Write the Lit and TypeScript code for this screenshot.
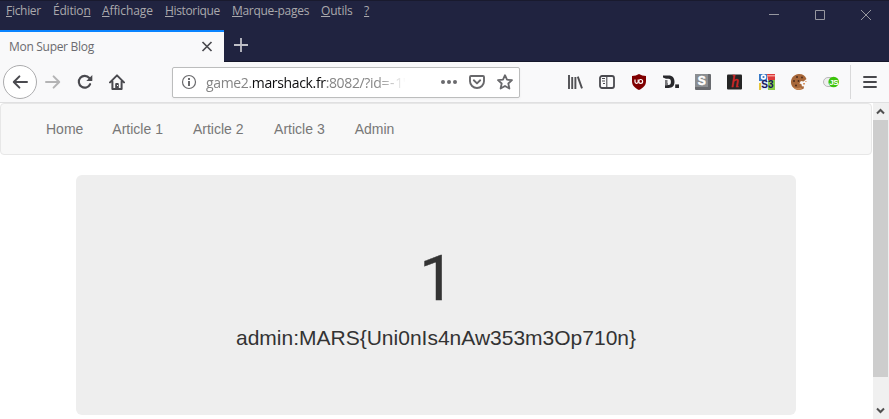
import { LitElement, html, css, svg } from "lit";
import { customElement } from "lit/decorators.js";

const menus: [string, string, string, string][] = [
  ["", "F", "ichier", "m0"],
  ["Éditio", "n", "", "m1"],
  ["", "A", "ffichage", "m2"],
  ["", "H", "istorique", "m3"],
  ["", "M", "arque-pages", "m4"],
  ["", "O", "utils", "m5"],
  ["", "?", "", "m6"],
];

const icon = (body: unknown, cls = "") =>
  html`<svg class="icon ${cls}" width="16" height="16" viewBox="0 0 16 16">${body}</svg>`;

const back = svg`<path d="M15 8H2M7.4 2.4L1.8 8l5.6 5.6" fill="none" stroke="#4a4a4f" stroke-width="2" stroke-linecap="round" stroke-linejoin="round"/>`;
const forward = svg`<path d="M1 8h13M8.6 2.4L14.2 8l-5.6 5.6" fill="none" stroke="#b4b4b5" stroke-width="2" stroke-linecap="round" stroke-linejoin="round"/>`;
const reload = svg`<path d="M13.1 10.2A5.9 5.9 0 1 1 12.3 4" fill="none" stroke="#4a4a4f" stroke-width="2.1" stroke-linecap="round"/><path d="M15.3 1v5.4q0 .6-.6.6H9.3z" fill="#4a4a4f"/>`;
const home = svg`<path d="M1 8.4L8 1.4l7 7M3.4 7.5V15h9.2V7.5" fill="none" stroke="#4a4a4f" stroke-width="2" stroke-linecap="round" stroke-linejoin="round"/><path d="M6.2 15v-5q0-1 1-1h1.6q1 0 1 1v5z" fill="#4a4a4f"/><path d="M8 11h1v1H8z" fill="#fff"/>`;
const info = svg`<circle cx="8" cy="8" r="6.5" fill="none" stroke="#6a6a6d" stroke-width="1.2"/><path d="M7 4h2v2H7zM7 7h2v5H7z" fill="#6a6a6d"/>`;
const dots = svg`<g fill="#6a6a6d"><circle cx="2" cy="8" r="2"/><circle cx="8" cy="8" r="2"/><circle cx="14" cy="8" r="2"/></g>`;
const pocket = svg`<path d="M2 2h12q1 0 1 1v4.2a7 6.8 0 0 1-14 0V3q0-1 1-1z" fill="none" stroke="#68686b" stroke-width="1.9"/><path d="M4.8 6.3L8 9.4l3.2-3.1" fill="none" stroke="#68686b" stroke-width="1.9" stroke-linecap="round" stroke-linejoin="round"/>`;
const star = svg`<path d="M8 1.2l2 4.5 5 .5-3.7 3.3 1.1 5L8 11.9l-4.4 2.6 1.1-5L1 6.2l5-.5z" fill="none" stroke="#68686b" stroke-width="1.8" stroke-linejoin="round"/>`;
const library = svg`<path d="M2 1v14M5.2 3v12M8.400 3v12M10.800 2.600L15 14.400" fill="none" stroke="#505053" stroke-width="1.900"/>`;
const sidebar = svg`<rect x="1" y="2" width="14" height="12" rx="2" fill="none" stroke="#4a4a4f" stroke-width="1.8"/><path d="M7.8 2.5v11M3 4.5h3M3 7h3M4 9.5h2" stroke="#4a4a4f" stroke-width="1.1"/>`;
const shield = svg`<path d="M8 0Q11 1.8 15 2v5c0 4.500-2.500 6.800-7 9-4.500-2.200-7-4.500-7-9V2Q5 1.800 8 0z" fill="#800000"/><path d="M4 5.600v2.200q0 1.500 1.500 1.500h.2q1.500 0 1.500-1.500V5.600" fill="none" stroke="#fff" stroke-width="1.200"/><circle cx="9.700" cy="7.400" r="1.900" fill="none" stroke="#fff" stroke-width="1.200"/>`;
const dashlane = svg`<path d="M0 1.500h5.500C9.800 1.500 11.500 4 11.500 7.800S9.800 14 5.500 14H2V9h2.500v2h1c1.700 0 2.400-1 2.400-3.200S7.200 4.700 5.500 4.700H3L0 3.500z" fill="#29292c"/><path d="M2 6h2.500v5.500H2z" fill="#77777a"/><path d="M12.200 10.400H16V14h-3.800z" fill="#29292c"/>`;
const stylish = svg`<rect width="16" height="16" rx="1" fill="#696b6f"/><path d="M0 0h13v13H0z" fill="#8b8e91"/><text x="6.700" y="11" text-anchor="middle" class="glyph-s">S</text>`;
const hack = svg`<rect y="0.500" width="15" height="15" rx="1" fill="#252525"/><text x="8" y="13" text-anchor="middle" class="glyph-h">h</text>`;
const search3 = svg`<rect x=".5" y=".5" width="15" height="15" fill="#e9f2fb"/><path d="M0 0h8v7H0z" fill="#3779c6"/><path d="M8 0h8v6H9z" fill="#dc3b3b"/><path d="M8 1h8v1.500H8z" fill="#f69a94"/><path d="M0 9h2v7H0z" fill="#e7c73a"/><path d="M9 6h7v10H9z" fill="#8cca49"/><circle cx="4.500" cy="3" r="2.700" fill="#fff"/><circle cx="4.500" cy="3" r="1.100" fill="#3779c6"/><path d="M2 7.500h7V15H2z" fill="#dceaf7"/><text x="2.300" y="14" class="glyph-s3">S3</text>`;
const cookie = svg`<path d="M8 0a8 8 0 1 0 5 14.200l-.5-2.200-1.500.5-.6-2.500-2-.5 1.500-2.500 2.600.5L15.500 5A8 8 0 0 0 8 0z" fill="#a8683a"/><path d="M2 13.200A8 8 0 0 0 11 15l-1-1.500Q6 14.500 2 13.200z" fill="#c98a57"/><g fill="#4e2b1b"><circle cx="6" cy="3" r="1"/><circle cx="11" cy="3.500" r=".9"/><circle cx="3" cy="7" r="1"/><circle cx="7.500" cy="7" r=".9"/><circle cx="5" cy="11.500" r="1"/></g><path d="M12 9h2v1.500h-2zM14.300 7h1.200v1h-1.200z" fill="#d99667"/>`;
const toggle = svg`<rect x=".5" y="3.500" width="14" height="9" rx="4.500" fill="#eee" stroke="#b9b9b9"/><circle cx="10.700" cy="8" r="5.300" fill="#3cc40a"/><text x="10.700" y="11" text-anchor="middle" class="glyph-js">JS</text>`;
const burger = svg`<path d="M2 3h12M2 8h12M2 13h12" stroke="#48484c" stroke-width="1.900" stroke-linecap="round"/>`;

@customElement("app-root")
export class AppRoot extends LitElement {
  static styles = css`
    :host { display: flex; flex-direction: column; width: 889px; height: 419px; overflow: hidden; background: #fff; }
    * { box-sizing: border-box; }
    svg { display: block; flex: none; }
    .title { height: 30px; display: flex; justify-content: space-between; background: #202340; border-top: 1px solid #191a2e; }
    .menus { display: flex; gap: 12px; padding-left: 6px; font: 12px/19px "Open Sans", "Noto Sans", sans-serif; color: #aaa9ad; }
    .menu { white-space: nowrap; height: 19px; }
    .menu u { text-underline-offset: 1px; text-decoration-thickness: 1px; }
    .m0 { width: 35px; letter-spacing: -0.3px; }
    .m1 { width: 37px; letter-spacing: -0.2px; }
    .m2 { width: 51px; letter-spacing: -0.1px; }
    .m3 { width: 55px; letter-spacing: -0.35px; }
    .m4 { width: 77px; letter-spacing: -0.3px; }
    .m5 { width: 31px; letter-spacing: -0.2px; }
    .m6 { width: 6px; }
    .controls { display: flex; padding: 8px 17px 0 0; gap: 34px; }
    .tabs { height: 32px; display: flex; background: #202340; border-bottom: 1px solid #15172b; }
    .tab { width: 224px; height: 32px; display: flex; align-items: center; justify-content: space-between; padding: 0 11px 0 9px; background: #f9f9fa; border-top: 2px solid #0a84ff; }
    .label { font: 12px/18px "Open Sans", "Noto Sans", sans-serif; letter-spacing: -0.3px; color: #6b6b6f; }
    .plus { margin: 7px 0 0 9px; }
    .toolbar { height: 41px; display: flex; align-items: center; background: #f9f9fa; border-bottom: 1px solid #e0e0e1; padding-left: 3px; }
    .ring { width: 34px; height: 34px; border: 1px solid #acacae; border-radius: 50%; background: #fff; display: grid; place-items: center; flex: none; }
    .nav { display: flex; gap: 16px; padding-left: 8px; }
    .url { width: 348px; height: 31px; margin-left: 47px; display: flex; align-items: center; background: #fff; border: 1px solid #bcbdbd; border-radius: 2px; padding: 0 6px 0 8px; box-shadow: 0 1px 3px #0000000d; }
    .address { width: 204px; margin-left: 9px; padding-top: 1px; font: 14px/20px "Open Sans", "Noto Sans", sans-serif; color: #858585; white-space: nowrap; overflow: hidden; letter-spacing: -0.35px; -webkit-mask-image: linear-gradient(90deg, #000 170px, transparent 200px); mask-image: linear-gradient(90deg, #000 170px, transparent 200px); }
    .address b { font-weight: 400; color: #0c0c0d; }
    .address .tail { letter-spacing: 0.6px; }
    .actions { display: flex; gap: 12px; margin-left: 31px; }
    .addons { display: flex; gap: 16px; margin-left: 47px; }
    .rule { width: 1px; height: 34px; background: #d9d9da; margin: 0 11px 0 11px; }
    .glyph-s { font: 900 12px "Liberation Sans", sans-serif; fill: #fff; stroke: #fff; stroke-width: 0.5px; }
    .glyph-h { font: italic 16px "Liberation Serif", serif; fill: #d22626; stroke: #d22626; stroke-width: 0.4px; }
    .glyph-s3 { font: bold 10px "Liberation Sans", sans-serif; fill: #15155c; }
    .glyph-js { font: bold 8px "Liberation Sans", sans-serif; letter-spacing: -0.4px; fill: #fff; }
    .view { height: 316px; display: flex; }
    .page { width: 872px; margin-right: 1px; font-family: "Liberation Sans", Arial, sans-serif; }
    .navbar { height: 52px; display: flex; align-items: center; padding-left: 30px; background: #f8f8f8; border: 1px solid #e7e7e7; border-radius: 4px; margin-bottom: 20px; }
    .navbar a { padding: 0 15px; font-size: 14px; line-height: 20px; color: #777; }
    .navbar a:first-child { margin-right: -1px; }
    .navbar a:nth-child(3) { margin-right: 0.6px; }
    .jumbotron { width: 720px; height: 240px; margin: 0 auto; padding: 49px 60px 47px; border-radius: 6px; background: #eee; text-align: center; color: #333; }
    h1 { margin: 20px 0 9px; font: 400 63px/70px Roboto, "Liberation Sans", sans-serif; text-indent: 2px; -webkit-text-stroke: 0.4px #333; }
    p { margin: 0; font-size: 21px; line-height: 30px; }
    .scroll { width: 16px; display: flex; flex-direction: column; background: #f0f0f0; }
    .arrow { height: 17px; display: grid; place-items: center; padding-right: 1px; }
    .thumb { height: 257px; background: #cdcdcd; width: 15px; }
    .space { flex: 1; }
  `;

  render() {
    return html`
      <header class="title">
        <nav class="menus">
          ${menus.map(([a, key, b, cls]) => html`<span class="menu ${cls}">${a}<u>${key}</u>${b}</span>`)}
        </nav>
        <div class="controls">
          <svg width="12" height="12" viewBox="0 0 12 12"><path d="M1 5.500h10" stroke="#96979f"/></svg>
          <svg width="12" height="12" viewBox="0 0 12 12"><path d="M1.500 1.500h9v9h-9z" fill="none" stroke="#96979f"/></svg>
          <svg width="12" height="12" viewBox="0 0 12 12"><path d="M1 1l10 10M11 1L1 11" stroke="#96979f"/></svg>
        </div>
      </header>
      <div class="tabs">
        <div class="tab">
          <span class="label">Mon Super Blog</span>
          <svg width="12" height="12" viewBox="0 0 12 12"><path d="M1.500 1l9 9M10.500 1l-9 9" stroke="#4a4a4f" stroke-width="1.700"/></svg>
        </div>
        <svg class="plus" width="16" height="16" viewBox="0 0 16 16"><path d="M8 1v14M1 8h14" stroke="#bfbfc7" stroke-width="1.800"/></svg>
      </div>
      <div class="toolbar">
        <div class="ring">${icon(back)}</div>
        <div class="nav">${icon(forward)}${icon(reload)}${icon(home)}</div>
        <div class="url">
          ${icon(info)}
          <span class="address">game2.<b>marshack.fr</b>:8082/?id<span class="tail">=-</span>1'</span>
          <div class="actions">${icon(dots)}${icon(pocket)}${icon(star)}</div>
        </div>
        <div class="addons">
          ${[library, sidebar, shield, dashlane, stylish, hack, search3, cookie, toggle].map((i) => icon(i))}
        </div>
        <div class="rule"></div>
        ${icon(burger)}
      </div>
      <main class="view">
        <div class="page">
          <nav class="navbar">
            ${["Home", "Article 1", "Article 2", "Article 3", "Admin"].map((t) => html`<a>${t}</a>`)}
          </nav>
          <section class="jumbotron">
            <h1>1</h1>
            <p>admin:MARS{Uni0nIs4nAw353m3Op710n}</p>
          </section>
        </div>
        <div class="scroll">
          <div class="arrow"><svg width="9" height="7" viewBox="0 0 9 7"><path d="M1 5.500L4.500 2 8 5.500" fill="none" stroke="#505050" stroke-width="2"/></svg></div>
          <div class="thumb"></div>
          <div class="space"></div>
          <div class="arrow"><svg width="9" height="7" viewBox="0 0 9 7"><path d="M1 1.500L4.500 5 8 1.500" fill="none" stroke="#505050" stroke-width="2"/></svg></div>
        </div>
      </main>
    `;
  }
}
